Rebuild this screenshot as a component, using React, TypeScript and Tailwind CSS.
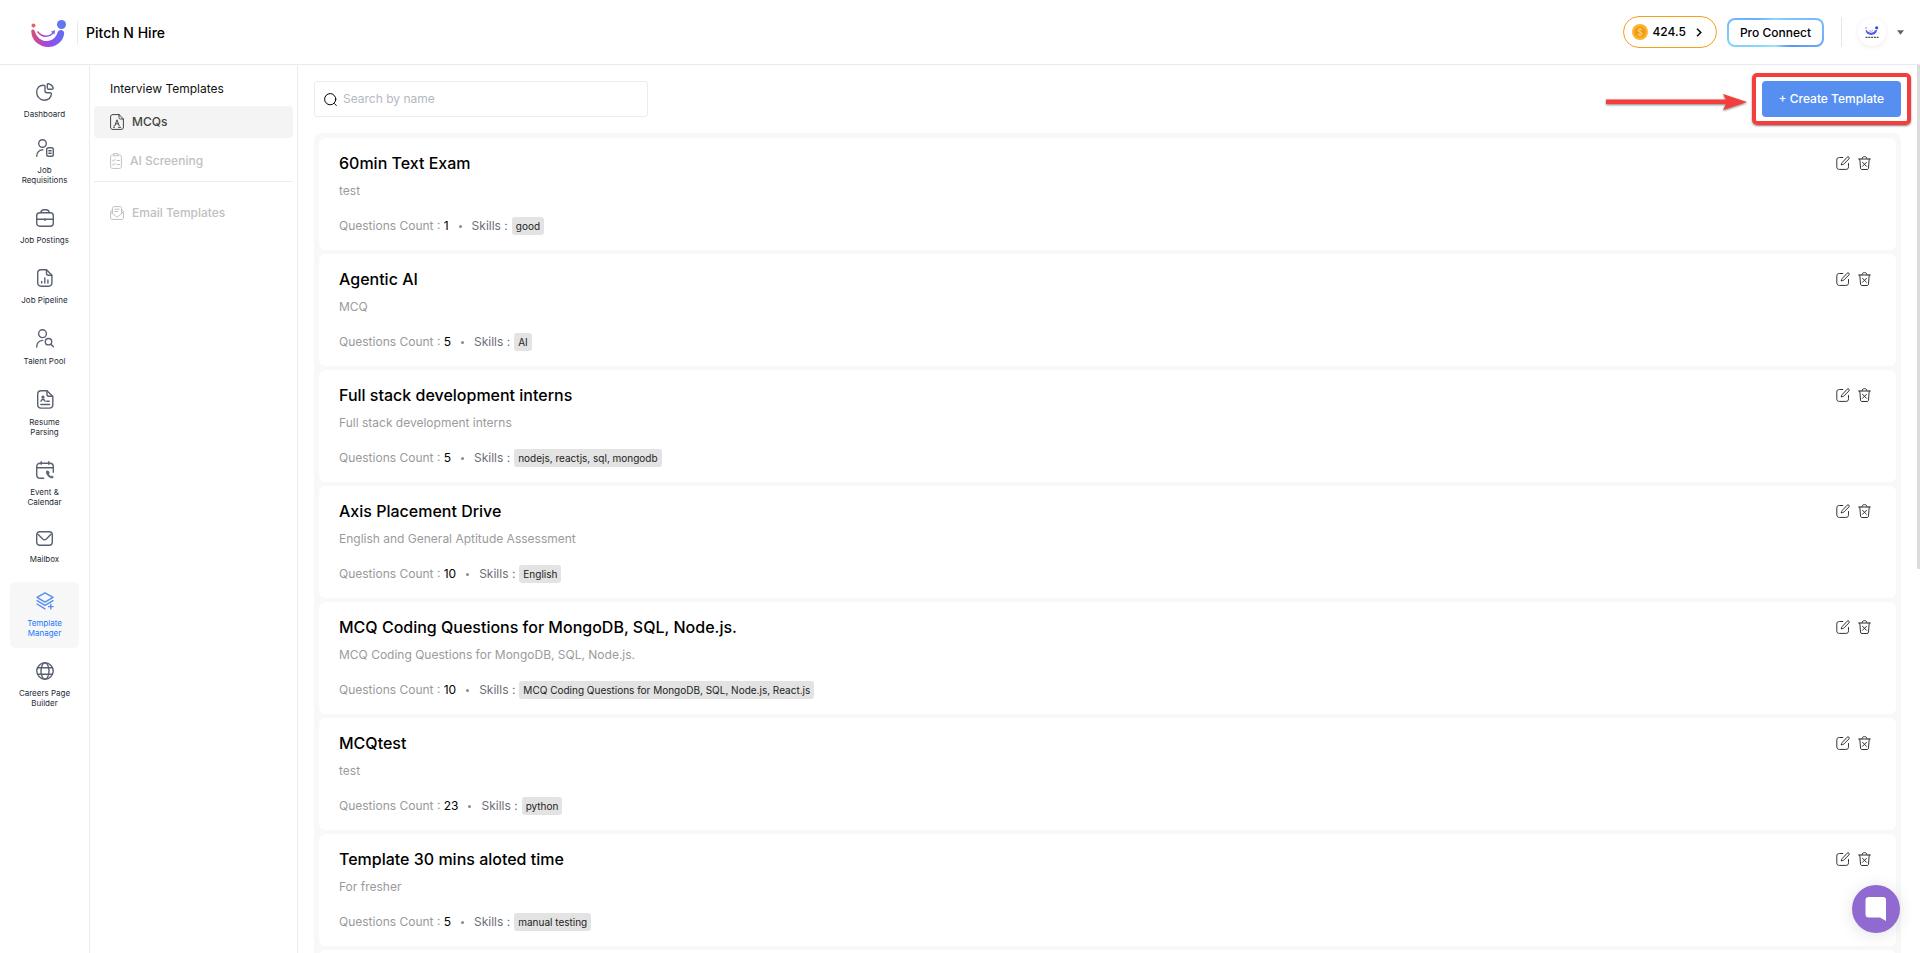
import type { ReactNode } from "react";

type IconProps = { children: ReactNode; w?: number; h?: number; sw?: number };

function Icon({ children, w = 18, h = 18, sw = 1.4 }: IconProps) {
  return (
    <svg
      width={w}
      height={h}
      viewBox={`0 0 ${w} ${h}`}
      fill="none"
      stroke="currentColor"
      strokeWidth={sw}
      strokeLinecap="round"
      strokeLinejoin="round"
      aria-hidden="true"
      className="shrink-0"
    >
      {children}
    </svg>
  );
}

const DashboardIcon = () => (
  <Icon>
    <path d="M7.400 2.200C3.600 2 .7 5 .7 9.200c0 4.500 3.300 8 7.600 8 3.800 0 6.600-2.500 7.100-6 .1-.9-.4-1.400-1.300-1.400h-3.100c-1.200 0-2-.8-2-2V3.500c0-.8-.6-1.200-1.600-1.300Z" />
    <path d="M11.300 1.600c0-.6.5-1 1.100-.9 2.200.5 4.200 2.200 4.700 4.300.1.700-.3 1.200-1 1.200h-3.300c-.9 0-1.500-.6-1.500-1.500V1.600Z" />
  </Icon>
);
const RequisitionIcon = () => (
  <Icon>
    <circle cx="6.500" cy="4.500" r="3.800" />
    <path d="M.7 17.200c0-3.400 2.400-6.200 6-6.500" />
    <rect x="10.700" y="8.700" width="6.600" height="8.500" rx="1.800" />
    <path d="M12.800 11.700h2.400M12.800 14.200h2.400" />
  </Icon>
);
const BriefcaseIcon = () => (
  <Icon>
    <rect x=".7" y="3.700" width="16.600" height="13.500" rx="3" />
    <path d="M4.800 3.500C5.200 1.700 6.400.8 8 .8h2c1.600 0 2.800.9 3.200 2.700M1 10.200h16M9 9.800v1.600" />
  </Icon>
);
const PipelineIcon = () => (
  <Icon>
    <path d="M10.500.8H5.200C3 .8 1.700 2 1.700 4.200v9.600c0 2.200 1.300 3.400 3.500 3.400h7.200c2.200 0 3.500-1.200 3.500-3.400V6.200L10.500.8Z" />
    <path d="M10.500 1v3.200c0 1.300.8 2 2 2h3.200M5.700 14v-1.500M8.800 14V9M11.900 14v-3" />
  </Icon>
);
const TalentIcon = () => (
  <Icon h={19}>
    <circle cx="6.500" cy="4.700" r="3.900" />
    <path d="M.7 18c0-3.500 2.200-6.200 6-6.600" />
    <circle cx="12.500" cy="12.700" r="3.200" />
    <path d="m14.900 15.200 2.600 2.600" />
  </Icon>
);
const ResumeIcon = () => (
  <Icon h={19}>
    <path d="M11 .8H5.200C3 .8 1.700 2 1.700 4.200v10.500c0 2.200 1.300 3.400 3.500 3.400h8.100c2.200 0 3.500-1.200 3.500-3.400V6.400L11 .8Z" />
    <path d="M11 1v3.200c0 1.300.8 2.100 2 2.100h3.500M4.800 14.500h8.800M10.800 11.200h2.400M5 11.200c.3-1.200 1-1.700 2-1.700s1.700.5 2 1.700" />
    <circle cx="7" cy="7.200" r=".9" />
  </Icon>
);
const EventIcon = () => (
  <Icon>
    <path d="M7.700 17.200H4.200c-2.200 0-3.500-1.300-3.500-3.500V5.800c0-2.200 1.300-3.500 3.500-3.500h9.600c2.200 0 3.500 1.300 3.500 3.500v5.400M5.200.7v2.600M12.800.7v2.600M1 6.700h16" />
    <path d="M10.700 9.900c-.7.600-.6 2 .2 3.500 1 1.800 2.500 3.100 4.100 3.600 1.300.3 2.200-.1 2.500-.9l-1.500-1.300-1.300.6c-.9-.5-1.600-1.300-2-2.300l.7-1.300-1-1.900h-1.700Z" fill="currentColor" strokeWidth=".4" />
  </Icon>
);
const MailIcon = () => (
  <Icon h={15} w={17}>
    <rect x=".7" y=".7" width="15.600" height="13.600" rx="3" />
    <path d="m2 3.200 4.700 4.700c1.100 1 2.500 1 3.600 0L15 3.200" />
  </Icon>
);
const LayersIcon = () => (
  <Icon w={18}>
    <path d="m9 .8 8 4.500-8 4.800-8-4.800L9 .8Z" />
    <path d="m1 8.700 8 4.700 8-4.700M1 12l8 4.900M14.800 12.300v4.600M12.500 14.600h4.600" />
  </Icon>
);
const GlobeIcon = () => (
  <Icon>
    <circle cx="9" cy="9" r="8.200" />
    <ellipse cx="9" cy="9" rx="4" ry="8.200" />
    <path d="M1.700 5.700h14.600M1.700 12.300h14.600" />
  </Icon>
);

type NavItem = { label: string; icon: ReactNode; active?: boolean };

const navItems: NavItem[] = [
  { label: "Job Requisitions", icon: <RequisitionIcon /> },
  { label: "Job Postings", icon: <BriefcaseIcon /> },
  { label: "Job Pipeline", icon: <PipelineIcon /> },
  { label: "Talent Pool", icon: <TalentIcon /> },
  { label: "Resume Parsing", icon: <ResumeIcon /> },
  { label: "Event & Calendar", icon: <EventIcon /> },
  { label: "Mailbox", icon: <MailIcon /> },
  { label: "Template Manager", icon: <LayersIcon />, active: true },
  { label: "Careers Page Builder", icon: <GlobeIcon /> },
];

function NavLink({ label, icon, active }: NavItem) {
  return (
    <a
      href="#"
      className={`flex flex-col items-center gap-2 rounded-md px-2 py-2.5 text-center text-[8px] leading-[10px] ${
        active ? "mt-1 bg-[#f7f7f7] text-[#1677ff]" : "text-[#262b36]"
      }`}
    >
      <span className={active ? "text-[#568ff0]" : "text-[#596070]"}>{icon}</span>
      <span>{label}</span>
    </a>
  );
}

type Template = { title: string; description: string; count: number; skills: string };

const templates: Template[] = [
  { title: "60min Text Exam", description: "test", count: 1, skills: "good" },
  { title: "Agentic AI", description: "MCQ", count: 5, skills: "AI" },
  {
    title: "Full stack development interns",
    description: "Full stack development interns",
    count: 5,
    skills: "nodejs, reactjs, sql, mongodb",
  },
  {
    title: "Axis Placement Drive",
    description: "English and General Aptitude Assessment",
    count: 10,
    skills: "English",
  },
  {
    title: "MCQ Coding Questions for MongoDB, SQL, Node.js.",
    description: "MCQ Coding Questions for MongoDB, SQL, Node.js.",
    count: 10,
    skills: "MCQ Coding Questions for MongoDB, SQL, Node.js, React.js",
  },
  { title: "MCQtest", description: "test", count: 23, skills: "python" },
  { title: "Template 30 mins aloted time", description: "For fresher", count: 5, skills: "manual testing" },
];

function TemplateCard({ title, description, count, skills }: Template) {
  return (
    <article className="flex h-28 shrink-0 justify-between rounded-md bg-white px-5 pt-3">
      <div>
        <h2 className="text-base leading-[26px] font-medium text-black">{title}</h2>
        <p className="mt-[5px] text-xs leading-5 text-[#9b9b9b]">{description}</p>
        <div className="mt-4 flex items-center text-xs leading-[18px]">
          <span className="text-[#999]">
            Questions Count : <span className="text-black">{count}</span>
          </span>
          <span className="mx-2.5 size-[3px] rounded-full bg-[#8a8a8a]" />
          <span className="mr-1 text-[#6b6e76]">Skills :</span>
          <span className="rounded-[3px] bg-[#e3e3e3] px-1 text-[10px] leading-[18px] text-[#222]">{skills}</span>
        </div>
      </div>
      <div className="flex items-start gap-2 pt-1.5 pr-[5px] text-[#333]">
        <button type="button" aria-label="Edit template">
          <Icon w={14} h={14} sw={1}>
            <path d="M6.800 1.500H3.500C1.500 1.500.8 2.300.8 4.200v6.500c0 1.900.8 2.700 2.700 2.700h6.300c1.900 0 2.700-.8 2.700-2.700V7.500" />
            <path d="M5.500 8.700c.1-1.300.3-1.800 1-2.500l4.700-5c.6-.6 1.200-.5 1.700 0 .5.500.5 1.100 0 1.700L8 7.900c-.6.600-1.200.8-2.500.8Z" />
          </Icon>
        </button>
        <button type="button" aria-label="Delete template">
          <Icon w={13} h={14} sw={1}>
            <path d="M.6 3h11.800M1.800 3l.7 9c.1 1 .6 1.500 1.500 1.500h5c.9 0 1.400-.5 1.500-1.500l.7-9M4 2.800c.3-1.500.9-2.200 2.500-2.200S8.700 1.300 9 2.800M4.500 6.300l4 4M8.500 6.300l-4 4" />
          </Icon>
        </button>
      </div>
    </article>
  );
}

function Logo() {
  return (
    <svg width="36" height="28" viewBox="0 0 36 28" aria-hidden="true">
      <defs>
        <linearGradient id="logo" x1="0" y1="0" x2="1" y2="0">
          <stop offset="0" stopColor="#d8506e" />
          <stop offset=".35" stopColor="#b046cf" />
          <stop offset=".65" stopColor="#8b50ee" />
          <stop offset="1" stopColor="#5b74f2" />
        </linearGradient>
      </defs>
      <circle cx="2.500" cy="6.500" r="2" fill="#e2646e" />
      <circle cx="30.500" cy="5.500" r="4.500" fill="#6476ee" />
      <path
        d="M.3 11.500c1.200-1.700 3-1.300 3.500.7C5.800 18.500 10 22 16 22c5.300 0 9.300-4 10.500-8.500.7-3 6-3.500 6.700.2C33 21.500 26 28 17 28 8 28-.2 21 .3 11.500Z"
        fill="url(#logo)"
      />
      <path d="M6.500 12.500c4.500 6 12 6.500 16.500.4" fill="none" stroke="url(#logo)" strokeWidth="1.500" />
      <path d="m20 12.800 4-1.700-.5 4.500Z" fill="#8060e8" />
    </svg>
  );
}

function Header() {
  return (
    <header className="flex h-[65px] shrink-0 items-center justify-between border-b border-[#e9e9f2] pr-4 pl-[31px]">
      <div className="flex items-center pt-0.5">
        <Logo />
        <span className="mr-2 ml-2.5 h-6 w-px bg-[#e9e9ee]" />
        <span className="text-sm leading-6 font-medium text-black">Pitch N Hire</span>
      </div>
      <div className="flex items-center">
        <button
          type="button"
          className="flex h-8 items-center rounded-full border border-[#f5a019] pr-3.5 pl-2 text-xs font-medium text-black"
        >
          <svg width="16" height="16" viewBox="0 0 16 16" className="mr-1" aria-hidden="true">
            <circle cx="8" cy="8" r="8" fill="#fbb62c" />
            <circle cx="8" cy="8" r="5.800" fill="#f39a1d" />
            <path
              d="M10 5.800C9.500 5 8.700 4.800 8 4.800c-1.100 0-1.900.6-1.900 1.500 0 2.200 4 1.100 4 3.400 0 1-.9 1.600-2.100 1.600-1 0-1.800-.4-2.200-1.200M8 3.800v8.400"
              stroke="#ffd35c"
              strokeWidth="1.100"
              fill="none"
            />
          </svg>
          424.5
          <svg width="6" height="9" viewBox="0 0 6 9" className="ml-2.5" fill="none" stroke="#111" strokeWidth="1.600" aria-hidden="true">
            <path d="m1 .7 3.800 3.800L1 8.300" />
          </svg>
        </button>
        <button
          type="button"
          className="ml-2.5 rounded-lg bg-[conic-gradient(from_300deg,#6aaefc,#8ed8fb_60deg,#74b4fb_150deg,#4f97f6_190deg,#9fe3f8_240deg,#7fd0fb_320deg,#6aaefc)] p-0.5"
        >
          <span className="block rounded-md bg-white px-[11px] text-xs leading-[25px] font-medium text-black">
            Pro Connect
          </span>
        </button>
        <span className="mr-4 ml-[17px] h-[30px] w-px bg-[#e6e6f0]" />
        <button type="button" aria-label="Account menu" className="flex items-center gap-[11px]">
          <span className="flex size-7 items-center justify-center rounded-full bg-white shadow-[0_1px_5px_rgba(0,0,0,0.08)]">
            <svg width="14" height="12" viewBox="0 0 14 12" aria-hidden="true">
              <circle cx="11.700" cy="1.800" r="1.600" fill="#3350e0" />
              <circle cx="1" cy="2" r=".7" fill="#5560d8" />
              <path d="M.6 4C1 10.500 11.500 10.500 12 4l-2 .3C9 7.500 3.500 7.500 1.500 4Z" fill="#5158e6" />
              <path d="M3.500 4.200c1.200 1.400 3.500 1.400 4.700 0" stroke="#7a80ea" strokeWidth=".7" fill="none" />
              <path d="M.5 11.300h13" stroke="#222" strokeWidth="1" strokeDasharray="2 .8" />
            </svg>
          </span>
          <svg width="7" height="5" viewBox="0 0 7 5" fill="#5f6270" aria-hidden="true">
            <path d="M0 .3h7L3.500 4.700Z" />
          </svg>
        </button>
      </div>
    </header>
  );
}

function TemplateMenu() {
  return (
    <nav aria-label="Templates" className="w-[208px] shrink-0 border-r border-[#ebebf0] px-1 pt-3.5 text-xs leading-5 font-medium">
      <h1 className="px-4 font-normal text-[#111]">Interview Templates</h1>
      <a href="#" className="mt-[7px] flex h-8 items-center gap-2 rounded bg-[#f4f4f4] px-4 text-[#444]">
        <Icon w={14} h={16} sw={1}>
          <path d="M9 .6H3C1.300.6.6 1.400.6 3v10c0 1.600.7 2.400 2.400 2.400h8c1.700 0 2.400-.8 2.400-2.400V5L9 .6ZM9 1v2.500c0 1 .5 1.500 1.500 1.500h2.700" />
          <path d="M4 11.800h.8L7 5.800l2.200 6M5.500 9.800h3M8.500 13.300h2.200M3.500 13.300h1" />
        </Icon>
        MCQs
      </a>
      <a href="#" className="mt-2 flex h-[30px] items-center gap-2 px-4 text-[#c0c0c0]">
        <Icon w={12} h={16} sw={1}>
          <path d="M3.500 2H2.500C1.200 2 .6 2.700.6 4v9.200c0 1.400.7 2.200 2 2.200h6.800c1.300 0 2-.8 2-2.200V4c0-1.300-.7-2-2-2h-1M4 .6h4v2.200H4Z" />
          <path d="m2.500 7.300 1 .9 1.700-1.900M7 7.500h2.500M2.500 11.300l1 .9 1.700-1.900M7 11.500h2.500" />
        </Icon>
        AI Screening
      </a>
      <hr className="mt-[5px] border-[#ececf0]" />
      <a href="#" className="mt-[15px] flex h-8 items-center gap-2 px-4 text-[#c0c0c0]">
        <Icon w={14} h={14} sw={1}>
          <path d="M2.500 7.500V2.200C2.500 1.100 3 .6 4 .6h6c1 0 1.500.5 1.500 1.600v5.300M4.800 3.200h4.400M4.800 5.500h3" />
          <path d="M2.500 3.500.6 5.300V12c0 1 .5 1.400 1.400 1.400h10c.9 0 1.400-.4 1.400-1.400V5.300l-1.900-1.800M.8 6.200l5 4.100c.8.600 1.600.6 2.400 0l5-4.100" />
        </Icon>
        Email Templates
      </a>
    </nav>
  );
}

export default function App() {
  return (
    <div className="flex h-screen flex-col overflow-hidden bg-white font-[Inter,sans-serif]">
      <Header />
      <div className="flex min-h-0 flex-1">
        <nav aria-label="Main" className="w-[90px] shrink-0 border-r border-[#ebebf0] px-2.5 pt-2">
          <NavLink label="Dashboard" icon={<DashboardIcon />} />
          <div className="flex flex-col gap-1">
            {navItems.map((item) => (
              <NavLink key={item.label} {...item} />
            ))}
          </div>
        </nav>
        <TemplateMenu />
        <main className="relative min-w-0 flex-1 overflow-hidden pt-4 pr-[19px] pl-4">
          <div className="flex items-center justify-between">
            <label className="flex h-9 w-[334px] items-center gap-1.5 rounded-[3px] border border-[#ebebf3] px-[9px]">
              <Icon w={13} h={13} sw={1}>
                <circle cx="6.200" cy="6.200" r="5.600" />
                <path d="m10.300 10.500 2 2" />
              </Icon>
              <input
                type="text"
                aria-label="Search by name"
                placeholder="Search by name"
                className="min-w-0 flex-1 text-xs leading-5 outline-none placeholder:text-[#b4b9c1]"
              />
            </label>
            <div className="relative">
              <button type="button" className="block h-9 rounded bg-[#568ff0] px-[17px] text-xs font-medium text-white">
                + Create Template
              </button>
              <div className="pointer-events-none absolute -inset-x-2.5 -inset-y-2 rounded-[5px] border-4 border-[#f43d3d] shadow-[0_1px_2px_rgba(0,0,0,0.5)]" />
              <svg
                width="142"
                height="20"
                viewBox="0 0 142 20"
                className="absolute top-3 right-[153px] drop-shadow-[0_1px_1px_rgba(0,0,0,0.5)]"
                aria-hidden="true"
              >
                <path d="M0 6.500h120L117 1l24 8-24 8 3-6H0Z" fill="#f43d3d" />
              </svg>
            </div>
          </div>
          <section className="mt-4 flex flex-col gap-1 rounded-lg bg-[#f8f8f8] p-[5px]">
            {templates.map((template) => (
              <TemplateCard key={template.title} {...template} />
            ))}
            <div className="h-28 shrink-0 rounded-md bg-white" />
          </section>
          <div className="absolute top-0 right-0 h-[504px] w-[3px] bg-[#dcdcdc]" />
        </main>
      </div>
      <button
        type="button"
        aria-label="Open chat"
        className="fixed right-5 bottom-5 flex size-12 items-center justify-center rounded-full bg-[#9069d1] shadow-[0_2px_16px_rgba(0,0,0,0.12)]"
      >
        <svg width="22" height="24" viewBox="0 0 22 24" fill="#fff" aria-hidden="true">
          <path d="M4 0h14c2 0 3 1 3 3v21l-6-3.500H4c-2.500 0-3.500-1-3.500-3.500V3.500C.5 1 1.500 0 4 0Z" />
        </svg>
      </button>
    </div>
  );
}
